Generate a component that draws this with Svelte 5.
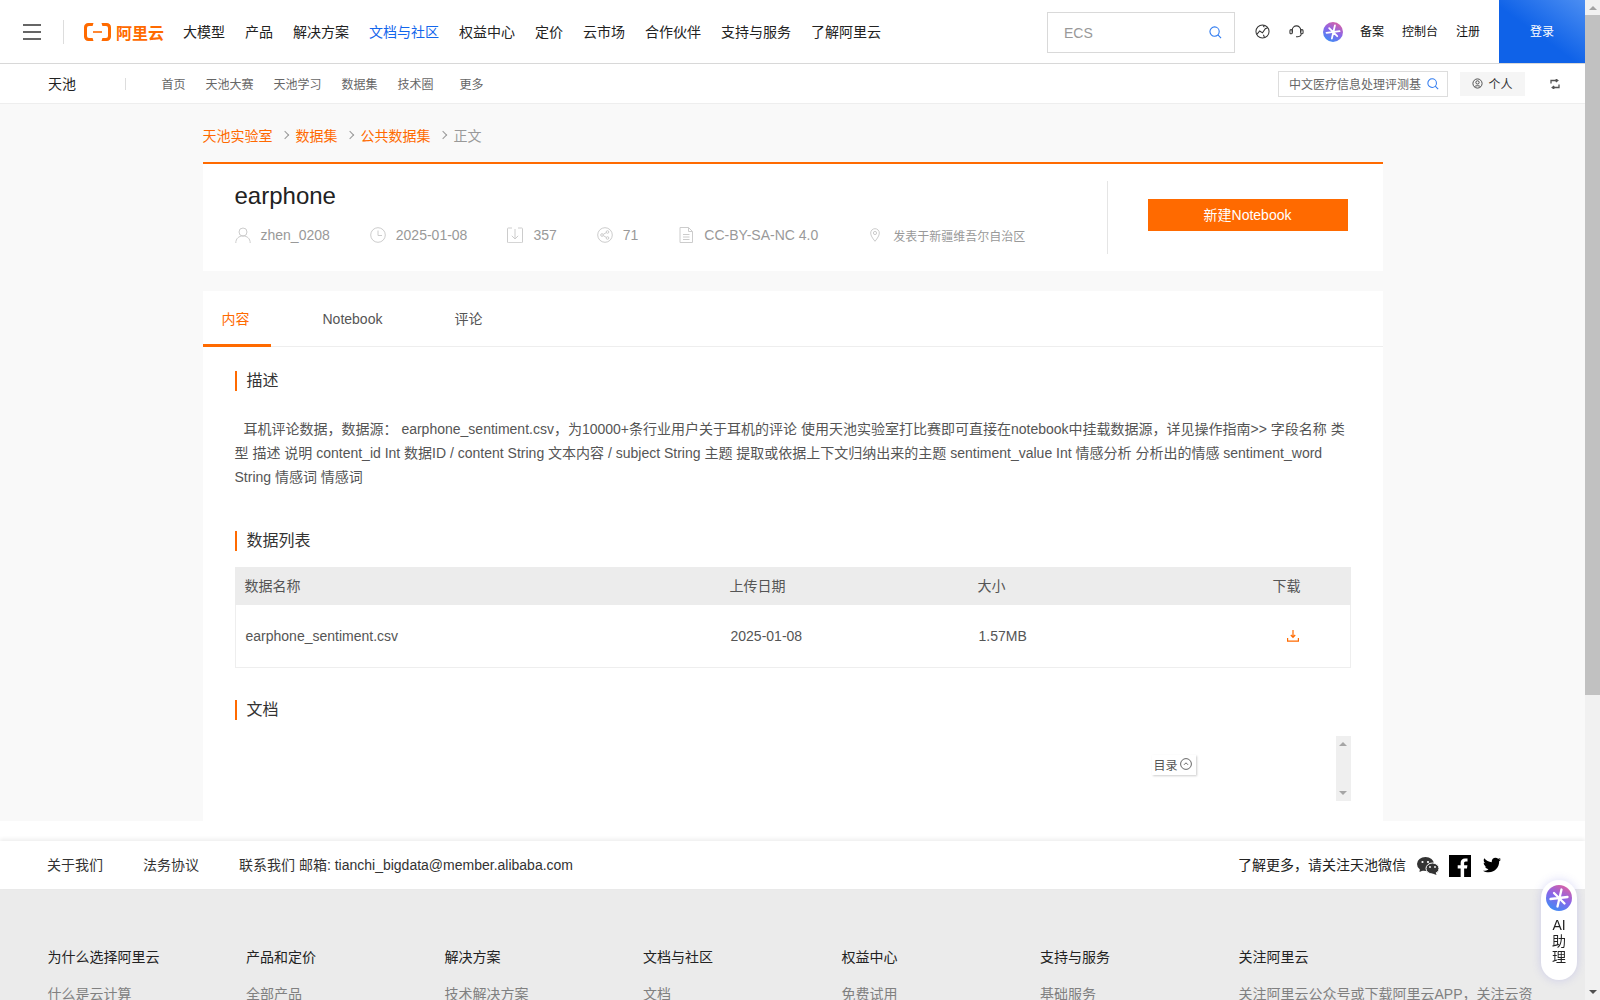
<script>
  const nav = ['大模型','产品','解决方案','文档与社区','权益中心','定价','云市场','合作伙伴','支持与服务','了解阿里云'];
  const sub = ['首页','天池大赛','天池学习','数据集','技术圈'];
  const cols = [
    ['为什么选择阿里云',['什么是云计算','全球基础设施','技术领先','稳定可靠','安全合规','分析师报告']],
    ['产品和定价',['全部产品','免费试用','产品动态','产品定价','价格计算器','云上成本管理']],
    ['解决方案',['技术解决方案','行业解决方案','客户案例','迁移上云','云上架构','方案体验']],
    ['文档与社区',['文档','开发者社区','天池大赛','培训与认证','技术博客','开放平台']],
    ['权益中心',['免费试用','高校计划','企业扶持计划','推荐返现计划','云工开物','权益发放']],
    ['支持与服务',['基础服务','企业增值服务','迁云服务','官网公告','健康看板','信任中心']]
  ];
</script>

<svelte:head><title>earphone</title></svelte:head>

{#snippet aiIcon(id)}
  <svg class="ai" viewBox="0 0 26 26" aria-hidden="true">
    <defs>
      <linearGradient {id} x1="0.8" y1="0" x2="0.3" y2="1">
        <stop offset="0" stop-color="#e0609f" />
        <stop offset="0.5" stop-color="#8a66e8" />
        <stop offset="1" stop-color="#3d8cf5" />
      </linearGradient>
    </defs>
    <circle cx="13" cy="13" r="13" fill="url(#{id})" />
    <path d="M4.500 14 L21.500 12 M15.500 4.500 L11.500 21.500 M8 8 L18.500 18.500" fill="none" stroke="#fff" stroke-width="2.300" stroke-linecap="round" />
  </svg>
{/snippet}

{#snippet searchIcon(cls)}
  <svg class={cls} viewBox="0 0 14 14" fill="none" stroke="#2f7bf0" stroke-width="1.2" aria-hidden="true">
    <circle cx="6" cy="6" r="5" /><path d="M9.6 9.6 L13 13" />
  </svg>
{/snippet}

<header class="top">
  <button class="burger" aria-label="菜单"><i></i><i></i><i></i></button>
  <span class="vline"></span>
  <a class="logo" href="#logo">
    <svg viewBox="0 0 27 18" aria-hidden="true">
      <path fill="#ff6a00" d="M9.5 0H4.2A4.2 4.2 0 0 0 0 4.2v9.6A4.2 4.2 0 0 0 4.2 18h5.3l-.9-3H5a2 2 0 0 1-2-2V5a2 2 0 0 1 2-2h3.6z" />
      <path fill="#ff6a00" d="M17.5 0h5.3A4.2 4.2 0 0 1 27 4.2v9.6a4.2 4.2 0 0 1-4.2 4.2h-5.3l.9-3H22a2 2 0 0 0 2-2V5a2 2 0 0 0-2-2h-3.6z" />
      <rect x="9" y="8.2" width="9" height="1.6" fill="#ff6a00" />
    </svg>
    <span>阿里云</span>
  </a>
  <nav class="mainnav">
    {#each nav as n}
      <a href="#n" class:active={n === '文档与社区'}>{n}</a>
    {/each}
  </nav>
  <div class="topsearch"><span>ECS</span>{@render searchIcon('s13')}</div>
  <div class="topicons">
    <svg class="i15" viewBox="0 0 16 16" fill="none" stroke="#333" stroke-width="1.1" aria-hidden="true">
      <circle cx="8" cy="8" r="7" /><path d="M2 11 L5 7.5 L8 9.5 L11 5 L13.5 4 M8.5 1.5 L10 3.5 M10 14 L9 11.5" />
    </svg>
    <svg class="i15" viewBox="0 0 16 16" fill="none" stroke="#333" stroke-width="1.1" aria-hidden="true">
      <path d="M3.5 9V6.5a4.5 4.5 0 0 1 9 0V9" /><rect x="1" y="6" width="2.5" height="4.5" rx="1.2" /><rect x="12.5" y="6" width="2.5" height="4.5" rx="1.2" /><path d="M13 10.5c0 2-1.5 3-3.5 3H7.5" />
    </svg>
    {@render aiIcon('g1')}
  </div>
  <div class="toplinks"><a href="#a">备案</a><a href="#a">控制台</a><a href="#a">注册</a></div>
  <a class="login" href="#l">登录</a>
</header>

<div class="subnav">
  <span class="brand">天池</span>
  <span class="sline"></span>
  <div class="sublinks">
    {#each sub as s}<a href="#s">{s}</a>{/each}
    <a class="more" href="#s">更多</a>
  </div>
  <div class="subsearch"><span>中文医疗信息处理评测基</span>{@render searchIcon('s12')}</div>
  <div class="me">
    <svg viewBox="0 0 12 12" fill="none" stroke="#444" aria-hidden="true"><circle cx="6" cy="6" r="5" /><circle cx="6" cy="4.8" r="1.8" /><path d="M2.8 9.6C3.6 8 8.4 8 9.2 9.6" /></svg>
    <span>个人</span>
  </div>
  <svg class="swap" viewBox="0 0 10 10" fill="none" stroke="#555" stroke-width="1.3" aria-hidden="true">
    <path d="M1 4.500V1.500H7.500M5.800 0 L7.800 1.500 L5.800 3 M9 5.500V8.500H2.500M4.200 7 L2.200 8.500 L4.200 10" />
  </svg>
</div>

<main class="page">
  <div class="wrap">
    <div class="crumbs">
      <a href="#c">天池实验室</a><i></i><a href="#c">数据集</a><i></i><a href="#c">公共数据集</a><i></i><span>正文</span>
    </div>

    <section class="head">
      <div class="info">
        <h1>earphone</h1>
        <div class="meta">
          <span class="item">
            <svg viewBox="0 0 16 16" fill="none" stroke="#ccc" aria-hidden="true"><circle cx="8" cy="5" r="4" /><path d="M.8 16c0-4.5 3-7 7.2-7s7.2 2.500 7.200 7" /></svg>
            zhen_0208
          </span>
          <span class="item">
            <svg viewBox="0 0 16 16" fill="none" stroke="#ccc" aria-hidden="true"><circle cx="8" cy="8" r="7.300" /><path d="M8 3.500V8.500H12" /></svg>
            2025-01-08
          </span>
          <span class="item">
            <svg viewBox="0 0 16 16" fill="none" stroke="#ccc" aria-hidden="true"><path d="M5 1H1.200A.7.7 0 0 0 .5 1.700V15a.7.7 0 0 0 .7.7H14.800a.7.7 0 0 0 .7-.7V1.700a.7.7 0 0 0-.7-.7H11" /><path d="M8 2V12M4.800 8.800 L8 12 L11.200 8.800" /></svg>
            357
          </span>
          <span class="item">
            <svg viewBox="0 0 16 16" fill="none" stroke="#ccc" aria-hidden="true"><circle cx="8" cy="8" r="7.300" /><circle cx="5" cy="8" r="1.300" /><circle cx="10.500" cy="5" r="1.300" /><circle cx="10.500" cy="11" r="1.300" /><path d="M6.200 7.400 L9.300 5.600 M6.200 8.600 L9.300 10.400" /></svg>
            71
          </span>
          <span class="item">
            <svg viewBox="0 0 16 16" fill="none" stroke="#ccc" aria-hidden="true"><path d="M2 .5H10.500L14.500 4.500V15.500H2Z" /><path d="M10.500 .5V4.500H14.500M5 7.500H11.500M5 10H11.500M5 12.500H11.500" /></svg>
            CC-BY-SA-NC 4.0
          </span>
          <span class="item pin">
            <svg viewBox="0 0 10 14" fill="none" stroke="#ccc" aria-hidden="true"><path d="M5 13.300C2.500 10 .7 7.800 .7 5a4.300 4.300 0 0 1 8.600 0C9.300 7.800 7.500 10 5 13.300Z" /><circle cx="5" cy="5" r="1.600" /></svg>
            <small>发表于新疆维吾尔自治区</small>
          </span>
        </div>
      </div>
      <div class="action"><button>新建Notebook</button></div>
    </section>

    <section class="content">
      <div class="tabs">
        <a class="on" href="#t">内容</a><a href="#t">Notebook</a><a href="#t">评论</a>
      </div>
      <div class="body">
        <h2>描述</h2>
        <p>耳机评论数据，数据源： earphone_sentiment.csv，为10000+条行业用户关于耳机的评论 使用天池实验室打比赛即可直接在notebook中挂载数据源，详见操作指南&gt;&gt; 字段名称 类型 描述 说明 content_id Int 数据ID / content String 文本内容 / subject String 主题 提取或依据上下文归纳出来的主题 sentiment_value Int 情感分析 分析出的情感 sentiment_word String 情感词 情感词</p>

        <h2 class="h-list">数据列表</h2>
        <div class="table">
          <div class="row thead"><span>数据名称</span><span>上传日期</span><span>大小</span><span>下载</span></div>
          <div class="row tbody">
            <span>earphone_sentiment.csv</span><span>2025-01-08</span><span>1.57MB</span>
            <span class="dl">
              <svg viewBox="0 0 12 12" fill="none" stroke="#ff6a00" stroke-width="1.200" aria-hidden="true"><path d="M6 0V7M3.800 5 L6 7.400 L8.200 5" /><path d="M.6 8V11.200H11.400V8" /></svg>
            </span>
          </div>
        </div>

        <h2 class="h-doc">文档</h2>
        <div class="docbox">
          <div class="toc">
            <span>目录</span>
            <svg viewBox="0 0 12 12" fill="none" stroke="#666" aria-hidden="true"><circle cx="6" cy="6" r="5.400" /><path d="M4 6.800 L6 4.800 L8 6.800" /></svg>
          </div>
          <div class="miniscroll"><i class="up"></i><i class="down"></i></div>
        </div>
      </div>
    </section>
  </div>
</main>

<footer>
  <div class="band">
    <a href="#f">关于我们</a><a href="#f">法务协议</a><span class="mail">联系我们 邮箱: tianchi_bigdata@member.alibaba.com</span>
    <span class="follow">了解更多，请关注天池微信</span>
    <svg class="wx" viewBox="0 0 22 18" fill="#333" aria-hidden="true">
      <ellipse cx="8.500" cy="7" rx="8.500" ry="7" /><path d="M3 11 L2.500 15 L7 13Z" />
      <ellipse cx="15.500" cy="11.500" rx="6.500" ry="5.500" fill="#333" stroke="#fff" stroke-width="1" /><path d="M18.500 15 L19.500 18 L15.500 16.500Z" />
      <circle cx="5.500" cy="5" r="1.100" fill="#fff" /><circle cx="11" cy="5" r="1.100" fill="#fff" /><circle cx="13" cy="10" r=".9" fill="#fff" /><circle cx="18" cy="10" r=".9" fill="#fff" />
    </svg>
    <svg class="fb" viewBox="0 0 24 24" aria-hidden="true">
      <rect width="24" height="24" fill="#000" /><path fill="#fff" d="M16.500 24v-9.300h3.100l.5-3.600h-3.600V8.800c0-1 .3-1.800 1.800-1.800h1.900V3.800c-.3 0-1.500-.1-2.800-.1-2.800 0-4.700 1.700-4.700 4.800v2.600H9.500v3.600h3.200V24z" />
    </svg>
    <svg class="tw" viewBox="0 0 24 24" fill="#000" aria-hidden="true">
      <path d="M23.954 4.569c-.885.389-1.830.654-2.825.775 1.014-.611 1.794-1.574 2.163-2.723-.951.555-2.005.959-3.127 1.184-.896-.959-2.173-1.559-3.591-1.559-2.717 0-4.920 2.203-4.920 4.917 0 .390.045.765.127 1.124C7.691 8.094 4.066 6.130 1.640 3.161c-.427.722-.666 1.561-.666 2.475 0 1.710.870 3.213 2.188 4.096-.807-.026-1.566-.248-2.228-.616v.061c0 2.385 1.693 4.374 3.946 4.827-.413.111-.849.171-1.296.171-.314 0-.615-.030-.916-.086.631 1.953 2.445 3.377 4.604 3.417-1.680 1.319-3.809 2.105-6.102 2.105-.390 0-.779-.023-1.170-.067 2.189 1.394 4.768 2.209 7.557 2.209 9.054 0 13.999-7.496 13.999-13.986 0-.209 0-.420-.015-.630.961-.689 1.800-1.560 2.460-2.548l-.047-.020z" />
    </svg>
  </div>
  <div class="grey">
    <div class="cols">
      {#each cols as c}
        <div class="col">
          <h3>{c[0]}</h3>
          {#each c[1] as l}<a href="#f">{l}</a>{/each}
        </div>
      {/each}
      <div class="col wide">
        <h3>关注阿里云</h3>
        <p>关注阿里云公众号或下载阿里云APP，关注云资讯，随时随地运维管控云服务</p>
      </div>
    </div>
    <div class="copy">© 2009-2025 Aliyun.com 版权所有</div>
  </div>
</footer>

<aside class="assistant">
  {@render aiIcon('g2')}
  <span>AI<br />助<br />理</span>
</aside>

<div class="pagebar" aria-hidden="true">
  <i class="bar-up"></i>
  <b></b>
  <i class="bar-down"></i>
</div>

<style>
  :global(body) {
    margin: 0 15px 0 0;
    background: #fff;
    font-family: "Liberation Sans", Arial, "Noto Sans CJK SC", sans-serif;
    font-size: 14px;
    color: #333;
  }
  a { color: inherit; text-decoration: none; }
  h1, h2, h3, p { margin: 0; font-weight: 400; }
  button { font-family: inherit; border: 0; padding: 0; cursor: pointer; }

  .top {
    display: flex;
    align-items: center;
    height: 63px;
    border-bottom: 1px solid #d8d8d8;
    background: #fff;
  }
  .burger {
    display: flex;
    flex-direction: column;
    justify-content: space-between;
    width: 18px;
    height: 16px;
    margin-left: 23px;
    background: none;
  }
  .burger i { display: block; height: 2px; background: #666; }
  .vline { width: 1px; height: 24px; margin-left: 22px; background: #ddd; }
  .logo { display: flex; align-items: center; gap: 5px; margin-left: 20px; color: #ff6a00; }
  .logo svg { width: 27px; height: 18px; }
  .logo span { font-size: 16px; font-weight: 700; letter-spacing: 0; white-space: nowrap; }
  .mainnav { display: flex; gap: 20px; margin: 0 0 2px 19px; color: #222; white-space: nowrap; }
  .mainnav .active { color: #1366ec; }

  .topsearch {
    box-sizing: border-box;
    display: flex;
    align-items: center;
    justify-content: space-between;
    width: 188px;
    height: 41px;
    margin: 2px 0 0 auto;
    padding: 0 12px 0 16px;
    border: 1px solid #d9d9d9;
    color: #999;
  }
  .s13 { width: 13px; height: 13px; }
  .s12 { width: 12px; height: 12px; flex: none; }
  .topicons { display: flex; align-items: center; margin-left: 20px; gap: 19px; }
  .i15 { width: 15px; height: 15px; }
  .ai { display: block; }
  .topicons .ai { width: 20px; height: 20px; }
  .toplinks { display: flex; gap: 18px; margin: 0 0 2px 17px; font-size: 12px; color: #111; white-space: nowrap; }
  .login {
    box-sizing: border-box;
    display: flex;
    align-items: center;
    justify-content: center;
    width: 86px;
    height: 63px;
    margin-left: 19px;
    padding-bottom: 2px;
    font-size: 12px;
    color: #fff;
    background: linear-gradient(to top right, #0f62e8 45%, #4c8ef2);
  }

  .subnav {
    display: flex;
    align-items: center;
    height: 39px;
    border-bottom: 1px solid #eee;
    background: #fff;
  }
  .brand { margin: 0 0 2px 48px; color: #222; }
  .sline { width: 1px; height: 12px; margin-left: 49px; background: #ddd; }
  .sublinks { display: flex; margin: 0 0 1px 35.5px; gap: 20px; font-size: 12px; color: #666; white-space: nowrap; }
  .more { margin-left: 6px; }
  .subsearch {
    box-sizing: border-box;
    display: flex;
    align-items: center;
    gap: 6px;
    width: 170px;
    height: 26px;
    margin-left: auto;
    padding: 0 10px;
    border: 1px solid #ddd;
    font-size: 12px;
    color: #666;
    white-space: nowrap;
  }
  .subsearch span { width: 132px; overflow: hidden; flex: none; }
  .me {
    display: flex;
    align-items: center;
    justify-content: center;
    gap: 5px;
    width: 65px;
    height: 24px;
    margin-left: 12px;
    background: #f5f5f5;
    font-size: 12px;
    color: #333;
  }
  .me svg { width: 11px; height: 11px; }
  .swap { width: 10px; height: 10px; margin: 0 25px 0 25px; }

  .page { background: #f9f9f9; }
  .wrap { width: 1180px; margin: 0 auto; }
  .crumbs {
    display: flex;
    align-items: center;
    height: 58px;
    padding-top: 4px;
    box-sizing: border-box;
    color: #ff6a00;
    white-space: nowrap;
  }
  .crumbs i {
    width: 5px;
    height: 5px;
    margin: 0 8px 0 9px;
    border-top: 1px solid #999;
    border-right: 1px solid #999;
    transform: rotate(45deg);
  }
  .crumbs span { color: #999; }

  .head {
    display: flex;
    align-items: flex-start;
    height: 107px;
    border-top: 2px solid #ff6a00;
    background: #fff;
  }
  .info { box-sizing: border-box; width: 904px; padding: 15px 0 0 32px; }
  h1 { font-size: 24px; line-height: 34px; color: #222; }
  .meta { display: flex; align-items: center; gap: 40px; margin-top: 10px; height: 24px; color: #999; white-space: nowrap; }
  .item { display: flex; align-items: center; gap: 10px; }
  .item svg { width: 16px; height: 16px; flex: none; }
  .pin { margin-left: 12px; gap: 13px; }
  .pin svg { width: 10px; height: 14px; }
  .pin small { font-size: 12px; }
  .action {
    box-sizing: border-box;
    width: 276px;
    height: 73px;
    margin-top: 17px;
    padding: 18px 0 0 40px;
    border-left: 1px solid #e5e5e5;
  }
  .action button { width: 200px; height: 32px; padding-bottom: 2px; background: #ff6a00; color: #fff; font-size: 14px; }

  .content { margin-top: 20px; background: #fff; }
  .tabs { display: flex; gap: 32px; height: 55px; border-bottom: 1px solid #eee; color: #555; }
  .tabs a { padding: 0 20px; line-height: 56px; height: 56px; box-sizing: border-box; }
  .tabs .on { padding: 0 21px 0 19px; color: #ff6a00; border-bottom: 3px solid #ff6a00; }
  .body { padding: 24px 32px 20px; }
  h2 {
    height: 20px;
    padding-left: 10px;
    border-left: 2px solid #ff6a00;
    font-size: 16px;
    line-height: 20px;
    color: #333;
  }
  .body p { margin-top: 26px; line-height: 24px; text-indent: 9px; color: #555; }
  .h-list { margin-top: 42px; }
  .table { margin-top: 16px; border: 1px solid #eee; border-top: 0; color: #555; }
  .row { display: grid; grid-template-columns: 485px 248px 295px 1fr; align-items: center; }
  .thead { box-sizing: border-box; height: 38px; margin: 0 -1px; padding: 0 1px 2px 10px; background: #ececec; }
  .tbody { height: 62px; padding-left: 10px; box-sizing: border-box; }
  .dl { display: flex; padding-left: 13px; }
  .dl svg { width: 12px; height: 12px; }
  .h-doc { margin-top: 32px; }
  .docbox { position: relative; height: 65px; margin-top: 16px; }
  .toc {
    position: absolute;
    left: 917px;
    top: 19px;
    display: flex;
    align-items: center;
    justify-content: flex-end;
    gap: 2px;
    box-sizing: border-box;
    width: 44px;
    height: 20px;
    padding: 0 4px 2px 0;
    background: #fff;
    box-shadow: 1px 1px 2px rgba(0,0,0,.2);
    font-size: 12px;
    color: #555;
  }
  .toc svg { width: 12px; height: 12px; flex: none; }
  .miniscroll {
    position: absolute;
    right: 0;
    top: 0;
    display: flex;
    flex-direction: column;
    justify-content: space-between;
    align-items: center;
    box-sizing: border-box;
    width: 15px;
    height: 65px;
    padding: 6px 0;
    background: #efefef;
  }
  .miniscroll i { width: 0; height: 0; border-left: 4px solid transparent; border-right: 4px solid transparent; }
  .miniscroll .up { border-bottom: 4px solid #a5a5a5; }
  .miniscroll .down { border-top: 4px solid #a5a5a5; }

  footer { margin-top: 20px; }
  .band {
    position: relative;
    box-sizing: border-box;
    display: flex;
    align-items: center;
    height: 48px;
    padding: 0 0 2px 47px;
    background: #fff;
    box-shadow: 0 -2px 4px rgba(0,0,0,.07);
    white-space: nowrap;
  }
  .band a { margin-right: 40px; color: #333; }
  .follow { margin-left: auto; color: #222; }
  .wx { width: 22px; height: 18px; margin: 4px 0 0 11px; }
  .fb { width: 22px; height: 22px; margin: 4px 0 0 10px; }
  .tw { width: 18px; height: 18px; margin: 2px 84px 0 12px; }
  .grey { background: #ebebeb; padding: 59px 0 40px 47.5px; }
  .cols { display: grid; grid-template-columns: repeat(6, 198.5px) 300px; }
  .col h3 { font-size: 14px; line-height: 20px; color: #222; margin: -1px 0 17px; }
  .col a { display: block; line-height: 20px; margin-bottom: 16px; color: #808080; }
  .col p { line-height: 24px; color: #808080; margin-top: -2px; }
  .copy { margin-top: 70px; color: #808080; font-size: 12px; line-height: 20px; }

  .assistant {
    position: fixed;
    left: 1541px;
    top: 880px;
    display: flex;
    flex-direction: column;
    align-items: center;
    box-sizing: border-box;
    width: 36px;
    height: 100px;
    padding-top: 5px;
    border-radius: 18px;
    background: #fff;
    box-shadow: 0 0 10px rgba(90,90,220,.22);
    color: #222;
    text-align: center;
    line-height: 16px;
  }
  .assistant .ai { width: 26px; height: 26px; margin-bottom: 6px; }

  .pagebar {
    position: fixed;
    right: 0;
    top: 0;
    display: flex;
    flex-direction: column;
    align-items: center;
    width: 15px;
    height: 100vh;
    background: #f1f1f1;
  }
  .pagebar b { display: block; width: 15px; height: 680px; margin-top: 5px; background: #c1c1c1; }
  .pagebar i { width: 0; height: 0; border-left: 4px solid transparent; border-right: 4px solid transparent; }
  .pagebar .bar-up { margin-top: 6px; border-bottom: 4px solid #a3a3a3; }
  .pagebar .bar-down { margin-top: auto; margin-bottom: 6px; border-top: 4px solid #505050; }
</style>
